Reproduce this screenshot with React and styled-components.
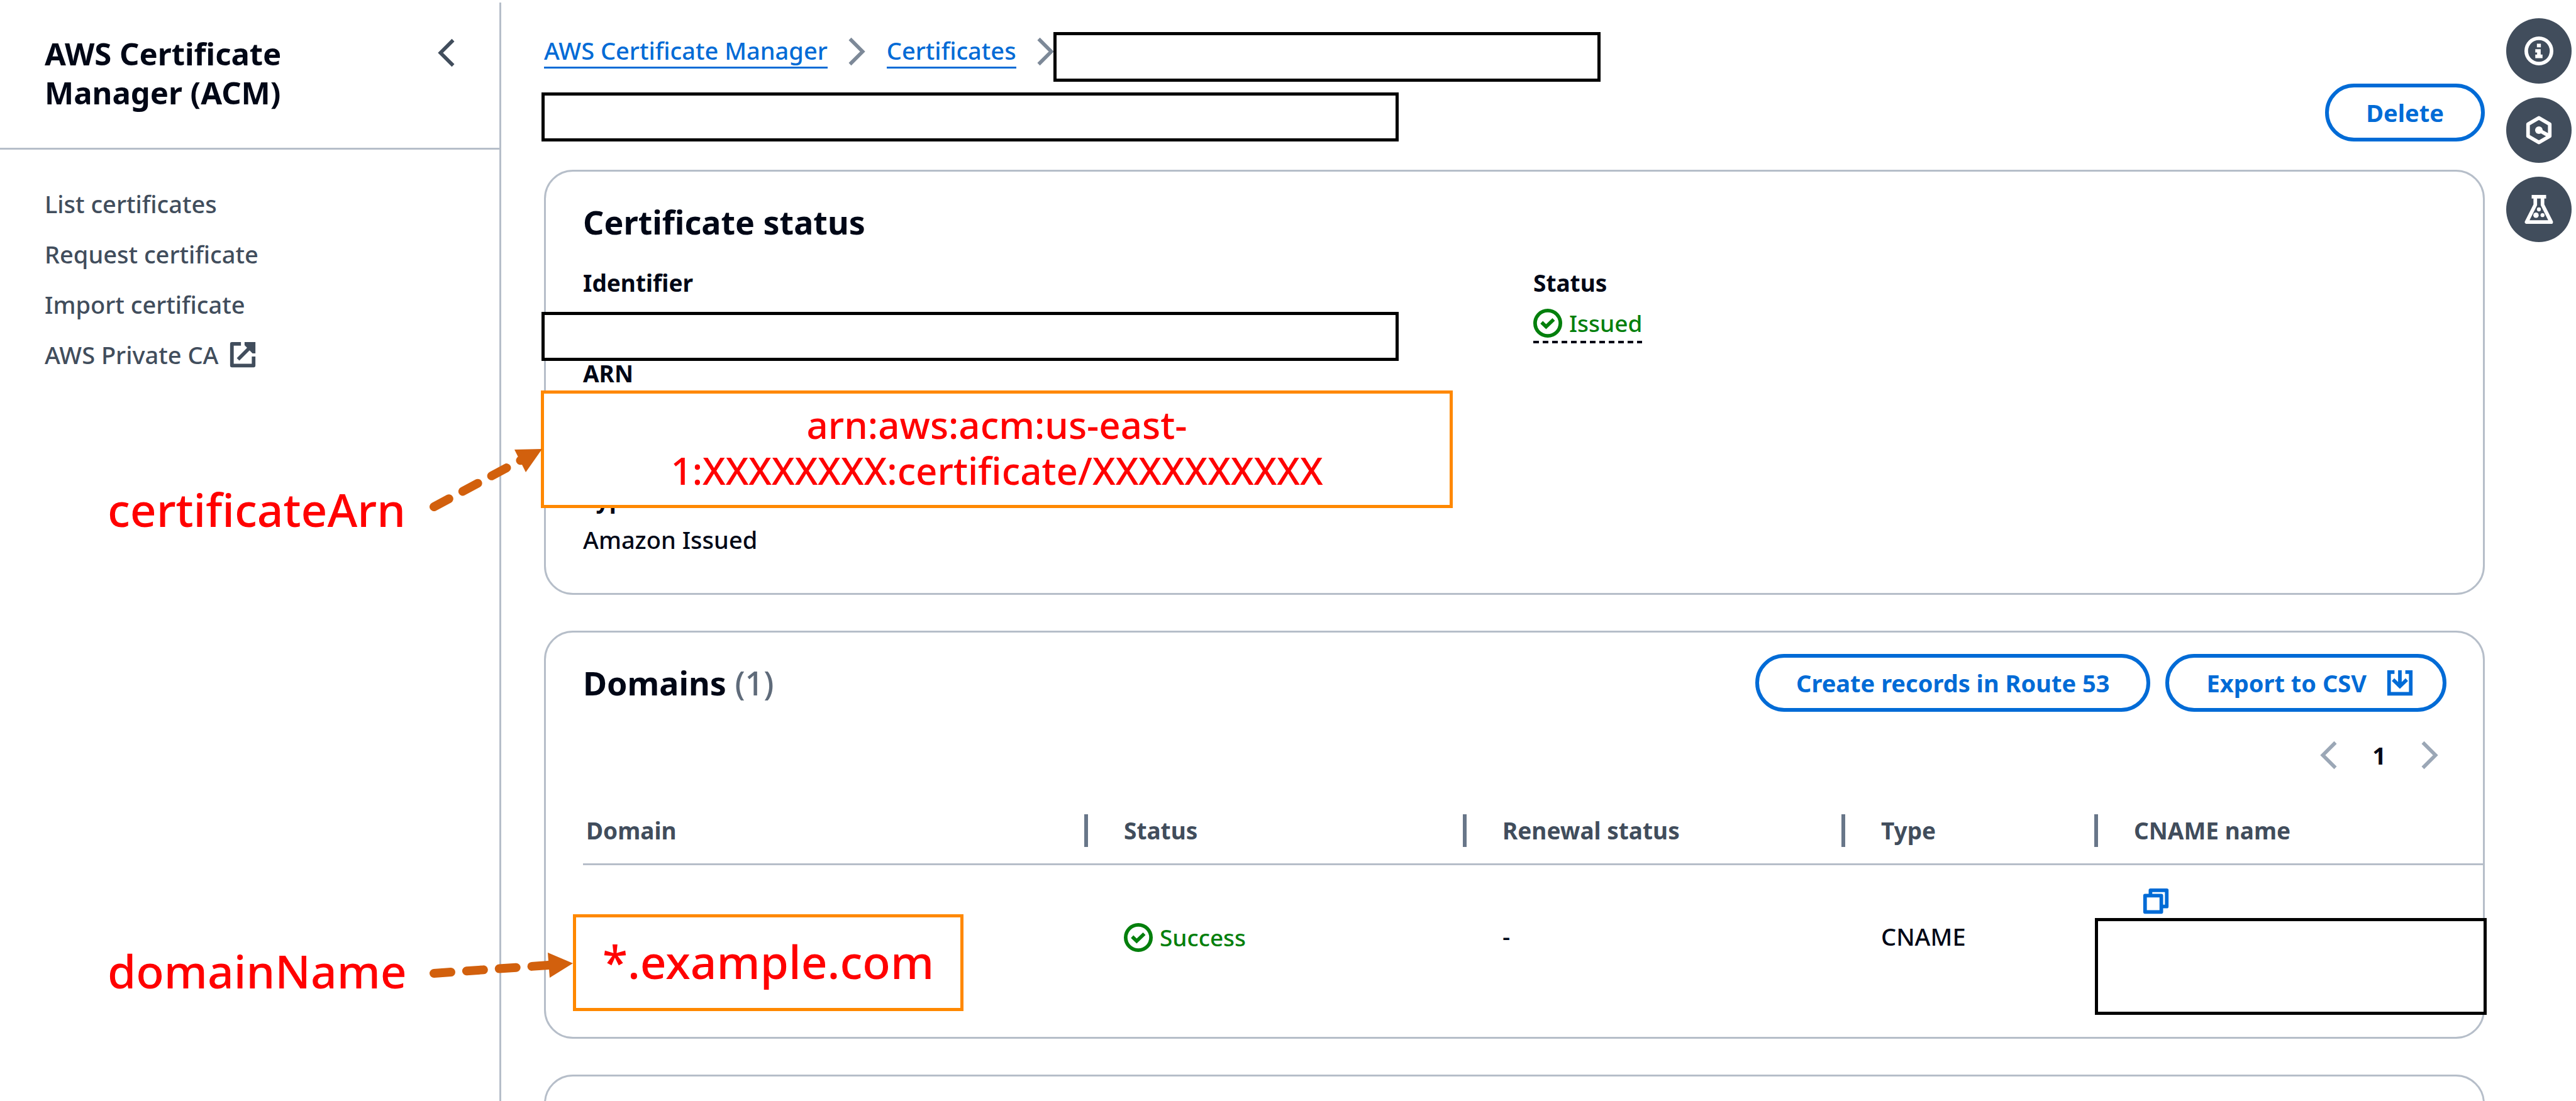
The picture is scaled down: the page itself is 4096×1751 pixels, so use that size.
import React from "react";
import styled, { createGlobalStyle } from "styled-components";

const color = {
  ink: "#000716",
  body: "#414d5c",
  muted: "#5f6b7a",
  disabled: "#9ba7b6",
  line: "#b6bec9",
  separator: "#687689",
  link: "#006bd6",
  success: "#037f0c",
  callout: "#ff0000",
  calloutBorder: "#ff8800",
  arrow: "#d2600d",
};

const GlobalStyle = createGlobalStyle`
  *, *::before, *::after { box-sizing: border-box; }
  body {
    margin: 0;
    background: #fff;
    color: ${color.ink};
    font-family: "Noto Sans", "Open Sans", sans-serif;
    font-size: 38px;
    font-weight: 500;
    line-height: 56px;
  }
  h1, h2, p, ul, ol, dl, dd { margin: 0; padding: 0; }
  ul, ol { list-style: none; }
  a { color: inherit; text-decoration: none; }
  button { font: inherit; cursor: pointer; }
`;

/* ---------- icons ---------- */

const Glyph = styled.svg`
  display: block;
  flex: none;
  width: 46px;
  height: 46px;
  fill: none;
  stroke: currentColor;
  stroke-width: 2;
  .solid { fill: currentColor; stroke: none; }
`;

function Icon({ children }) {
  return <Glyph viewBox="0 0 16 16" aria-hidden="true">{children}</Glyph>;
}

const ChevronRight = () => <Icon><path d="m4 1 7 7-7 7" /></Icon>;
const ChevronLeft = () => <Icon><path d="m12 1-7 7 7 7" /></Icon>;
const CheckCircle = () => (
  <Icon>
    <circle cx="8" cy="8" r="7" />
    <path d="m4.6 7.5 2.5 2.4 4.2-4" />
  </Icon>
);
const ExternalIcon = () => (
  <Icon>
    <path strokeLinejoin="round" d="M7 2H2v12h12V9" />
    <path d="m5.4 10.6 8-8" />
    <path className="solid" d="M9 1h6v6.3h-1.6L9 2.8z" />
  </Icon>
);
const DownloadIcon = () => (
  <Icon>
    <path d="M5 2H2v12h12V2h-3M8 1v9M4.2 6.2 8 9.9l3.8-3.7" />
  </Icon>
);
const CopyIcon = () => (
  <Icon>
    <path strokeLinejoin="round" d="M2 5h9v9H2zM5 5V2h9v9h-3" />
  </Icon>
);
const InfoIcon = () => (
  <Icon>
    <circle cx="8" cy="8" r="7" />
    <path className="solid" d="M6.9 4h2.2v2H6.9zM6 7h3v3h1v2H6v-2h1V8.9H6z" />
  </Icon>
);
const HexagonIcon = () => (
  <Icon>
    <path strokeLinejoin="round" d="m8 1.2 6 3.5v6.6l-6 3.5-6-3.5V4.7z" />
    <path d="m8 8 5.4 3" />
    <circle className="solid" cx="8" cy="8" r="2.1" />
  </Icon>
);
const FlaskIcon = () => (
  <Icon>
    <path strokeLinejoin="round" d="M4 1h8M6 1v4.5L1.2 15h13.6L10 5.5V1" />
    <circle className="solid" cx="8" cy="8" r="1.1" />
    <circle className="solid" cx="6.4" cy="11.2" r="1.5" />
    <circle className="solid" cx="10" cy="11.2" r="1.1" />
  </Icon>
);

/* ---------- page frame ---------- */

const Page = styled.div`
  position: relative;
  display: flex;
  height: 100vh;
  overflow: hidden;
`;

const Sidebar = styled.nav`
  flex: none;
  width: 797px;
  margin-top: 4px;
  border-right: 3px solid ${color.line};
  color: ${color.body};
`;

const SidebarHeader = styled.div`
  display: flex;
  justify-content: space-between;
  align-items: flex-start;
  padding: 50px 62px 57px 71px;
  border-bottom: 3px solid ${color.line};
`;

const ServiceName = styled.h2`
  width: 440px;
  color: ${color.ink};
  font-size: 49px;
  line-height: 62px;
`;

const IconButton = styled.button`
  display: block;
  padding: 0;
  border: 0;
  background: none;
  color: ${(p) => p.$color};
`;

const CollapseButton = styled(IconButton)`
  margin-top: 7px;
`;

const NavList = styled.ul`
  display: flex;
  flex-direction: column;
  gap: 28px;
  padding: 60px 71px;
  line-height: 52px;
`;

const NavLink = styled.a`
  display: flex;
  align-items: center;
  gap: 16px;
`;

const Main = styled.main`
  flex: 1;
  min-width: 0;
  padding: 54px 34px 0 68px;
`;

const Breadcrumbs = styled.ol`
  position: relative;
  display: flex;
  align-items: flex-start;
  gap: 24px;
  color: ${color.link};
  line-height: 52px;
`;

const Crumb = styled.li`
  display: flex;
  align-items: center;
  gap: 24px;
  svg { color: #7d8998; }
`;

const CrumbLink = styled.a`
  border-bottom: 3px solid ${color.link};
`;

const TitleRow = styled.header`
  display: flex;
  justify-content: space-between;
  align-items: flex-end;
  margin: 24px 0 45px;
`;

const Button = styled.button`
  display: flex;
  align-items: center;
  gap: 30px;
  height: 92px;
  padding: 0 ${(p) => (p.$withIcon ? 45 : 59)}px 0 59px;
  border: 6px solid ${color.link};
  border-radius: 46px;
  background: #fff;
  color: ${color.link};
  font-weight: 700;
  white-space: nowrap;
`;

const Stack = styled.div`
  display: flex;
  flex-direction: column;
  gap: 57px;
`;

const Card = styled.section`
  border: 3px solid ${color.line};
  border-radius: 46px;
  background: #fff;
`;

const CardTitle = styled.h2`
  font-size: 52px;
  line-height: 64px;
`;

const Count = styled.span`
  color: ${color.muted};
  font-weight: 500;
`;

/* ---------- boxes drawn over the console ---------- */

const Mask = styled.div`
  z-index: 1;
  border: 5px solid #000;
  background: #fff;
`;

const TitleMask = styled(Mask)`
  width: 1363px;
  height: 78px;
  margin-left: -4px;
`;

const CrumbMask = styled(Mask)`
  position: absolute;
  top: -3px;
  left: 810px;
  width: 870px;
  height: 79px;
`;

const IdentifierMask = styled(Mask)`
  position: absolute;
  top: 10px;
  left: -66px;
  width: 1363px;
  height: 78px;
`;

const CnameMask = styled(Mask)`
  position: absolute;
  top: 84px;
  left: -5px;
  right: -6px;
  height: 154px;
`;

const Highlight = styled.div`
  position: absolute;
  z-index: 1;
  display: flex;
  align-items: center;
  justify-content: center;
  padding-bottom: 5px;
  border: 5px solid ${color.calloutBorder};
  background: #fff;
  color: ${color.callout};
  text-align: center;
`;

const ArnHighlight = styled(Highlight)`
  top: -9px;
  left: -67px;
  width: 1450px;
  height: 187px;
  font-size: 60px;
  line-height: 73px;
`;

const DomainHighlight = styled(Highlight)`
  top: 78px;
  left: -16px;
  width: 621px;
  height: 154px;
  font-size: 73px;
  line-height: 88px;
`;

/* ---------- certificate status ---------- */

const StatusCard = styled(Card)`
  padding: 48px 57px 57px 59px;
`;

const Columns = styled.div`
  display: grid;
  grid-template-columns: 1fr 1fr;
  gap: 58px;
  margin-top: 37px;
`;

const Fields = styled.dl`
  display: flex;
  flex-direction: column;
  gap: 24px;
`;

const Label = styled.dt`
  margin-bottom: 8px;
  font-size: 37px;
  font-weight: 700;
`;

const Value = styled.dd`
  position: relative;
  min-height: ${(p) => (p.$lines || 1) * 56}px;
`;

const Status = styled.span`
  display: inline-flex;
  align-items: center;
  gap: 11px;
  color: ${color.success};
  font-size: 37px;
  vertical-align: middle;
`;

const StatusTrigger = styled(Status)`
  padding-bottom: 4px;
  background: repeating-linear-gradient(90deg, ${color.ink} 0 9px, transparent 9px 15px)
    bottom / 100% 4px no-repeat;
  vertical-align: top;
`;

/* ---------- domains ---------- */

const DomainsCard = styled(Card)`
  padding: 34px 0 43px 59px;
`;

const DomainsHeader = styled.div`
  display: flex;
  justify-content: space-between;
  align-items: center;
  padding-right: 58px;
`;

const Actions = styled.div`
  display: flex;
  gap: 24px;
`;

const Pagination = styled.div`
  display: flex;
  justify-content: flex-end;
  align-items: center;
  gap: 47px;
  padding: 46px 61px 45px 0;
  line-height: 46px;
`;

const PageNumber = styled.span`
  font-weight: 700;
`;

const Table = styled.table`
  width: 100%;
  border-collapse: separate;
  border-spacing: 0;
  table-layout: fixed;
  text-align: left;
`;

const Column = styled.col`
  width: ${(p) => p.$width};
`;

const HeaderCell = styled.th`
  padding: 26px 0;
  border-bottom: 3px solid ${color.line};
  color: ${color.body};
  font-size: 37px;
  line-height: 52px;
`;

const HeaderLabel = styled.div`
  padding-left: 57px;
  border-right: 6px solid ${color.separator};
  ${HeaderCell}:first-child & { padding-left: 5px; }
  ${HeaderCell}:last-child & { border-right: 0; }
`;

const Cell = styled.td`
  position: relative;
  height: 230px;
  padding: ${(p) => (p.$top ? "34px 0 0 69px" : "0 0 4px 57px")};
  vertical-align: ${(p) => (p.$top ? "top" : "middle")};
`;

/* ---------- floating tools ---------- */

const Tools = styled.aside`
  flex: none;
  display: flex;
  flex-direction: column;
  gap: 22px;
  padding: 29px 7px 0 0;
`;

const ToolButton = styled.button`
  display: flex;
  align-items: center;
  justify-content: center;
  width: 104px;
  height: 104px;
  padding: 0;
  border: 0;
  border-radius: 50%;
  background: ${color.body};
  color: #fff;
`;

/* ---------- callouts pointing at the highlighted values ---------- */

const CalloutLabel = styled.p`
  position: absolute;
  top: ${(p) => p.$top}px;
  left: 171px;
  color: ${color.callout};
  font-size: 73px;
  line-height: 90px;
`;

const Arrows = styled.svg`
  position: absolute;
  z-index: 2;
  top: 700px;
  left: 670px;
  width: 260px;
  height: 880px;
  pointer-events: none;
  line {
    stroke: ${color.arrow};
    stroke-width: 14;
    stroke-linecap: round;
    stroke-dasharray: 27 25;
  }
  polygon { fill: ${color.arrow}; }
`;

const columns = [
  { name: "Domain", width: "803px" },
  { name: "Status", width: "602px" },
  { name: "Renewal status", width: "602px" },
  { name: "Type", width: "402px" },
  { name: "CNAME name", width: "auto" },
];

export default function App() {
  return (
    <Page>
      <GlobalStyle />
      <Sidebar aria-label="Service navigation">
        <SidebarHeader>
          <ServiceName>AWS Certificate Manager (ACM)</ServiceName>
          <CollapseButton $color={color.body} aria-label="Close navigation"><ChevronLeft /></CollapseButton>
        </SidebarHeader>
        <NavList>
          <li><NavLink href="#list">List certificates</NavLink></li>
          <li><NavLink href="#request">Request certificate</NavLink></li>
          <li><NavLink href="#import">Import certificate</NavLink></li>
          <li><NavLink href="#private-ca">AWS Private CA<ExternalIcon /></NavLink></li>
        </NavList>
      </Sidebar>

      <Main>
        <Breadcrumbs>
          <Crumb><CrumbLink href="#acm">AWS Certificate Manager</CrumbLink><ChevronRight /></Crumb>
          <Crumb><CrumbLink href="#certificates">Certificates</CrumbLink><ChevronRight /></Crumb>
          <CrumbMask as="li" />
        </Breadcrumbs>
        <TitleRow>
          <TitleMask />
          <Button>Delete</Button>
        </TitleRow>

        <Stack>
          <StatusCard>
            <CardTitle>Certificate status</CardTitle>
            <Columns>
              <Fields>
                <div>
                  <Label>Identifier</Label>
                  <Value><IdentifierMask /></Value>
                </div>
                <div>
                  <Label>ARN</Label>
                  <Value $lines={2}>
                    <ArnHighlight>arn:aws:acm:us-east-<br />1:XXXXXXXX:certificate/XXXXXXXXXX</ArnHighlight>
                  </Value>
                </div>
                <div>
                  <Label>Type</Label>
                  <Value>Amazon Issued</Value>
                </div>
              </Fields>
              <Fields>
                <div>
                  <Label>Status</Label>
                  <Value><StatusTrigger><CheckCircle />Issued</StatusTrigger></Value>
                </div>
              </Fields>
            </Columns>
          </StatusCard>

          <DomainsCard>
            <DomainsHeader>
              <CardTitle>Domains <Count>(1)</Count></CardTitle>
              <Actions>
                <Button>Create records in Route 53</Button>
                <Button $withIcon>Export to CSV<DownloadIcon /></Button>
              </Actions>
            </DomainsHeader>
            <Pagination>
              <IconButton $color={color.disabled} aria-label="Previous page"><ChevronLeft /></IconButton>
              <PageNumber>1</PageNumber>
              <IconButton $color={color.disabled} aria-label="Next page"><ChevronRight /></IconButton>
            </Pagination>
            <Table>
              <colgroup>
                {columns.map((c) => <Column key={c.name} $width={c.width} />)}
              </colgroup>
              <thead>
                <tr>
                  {columns.map((c) => (
                    <HeaderCell key={c.name} scope="col"><HeaderLabel>{c.name}</HeaderLabel></HeaderCell>
                  ))}
                </tr>
              </thead>
              <tbody>
                <tr>
                  <Cell><DomainHighlight>*.example.com</DomainHighlight></Cell>
                  <Cell><Status><CheckCircle />Success</Status></Cell>
                  <Cell>-</Cell>
                  <Cell>CNAME</Cell>
                  <Cell $top>
                    <IconButton $color={color.link} aria-label="Copy CNAME name"><CopyIcon /></IconButton>
                    <CnameMask />
                  </Cell>
                </tr>
              </tbody>
            </Table>
          </DomainsCard>

          <StatusCard />
        </Stack>
      </Main>

      <Tools>
        <ToolButton aria-label="Info"><InfoIcon /></ToolButton>
        <ToolButton aria-label="Assistant"><HexagonIcon /></ToolButton>
        <ToolButton aria-label="Experiments"><FlaskIcon /></ToolButton>
      </Tools>

      <CalloutLabel $top={765}>certificateArn</CalloutLabel>
      <CalloutLabel $top={1499}>domainName</CalloutLabel>
      <Arrows viewBox="670 700 260 880" aria-hidden="true">
        <line x1="690" y1="806" x2="828" y2="732" />
        <polygon points="862,714 818,715 836,751" />
        <line x1="690" y1="1548" x2="872" y2="1535" />
        <polygon points="911,1532 871,1515 874,1555" />
      </Arrows>
    </Page>
  );
}
